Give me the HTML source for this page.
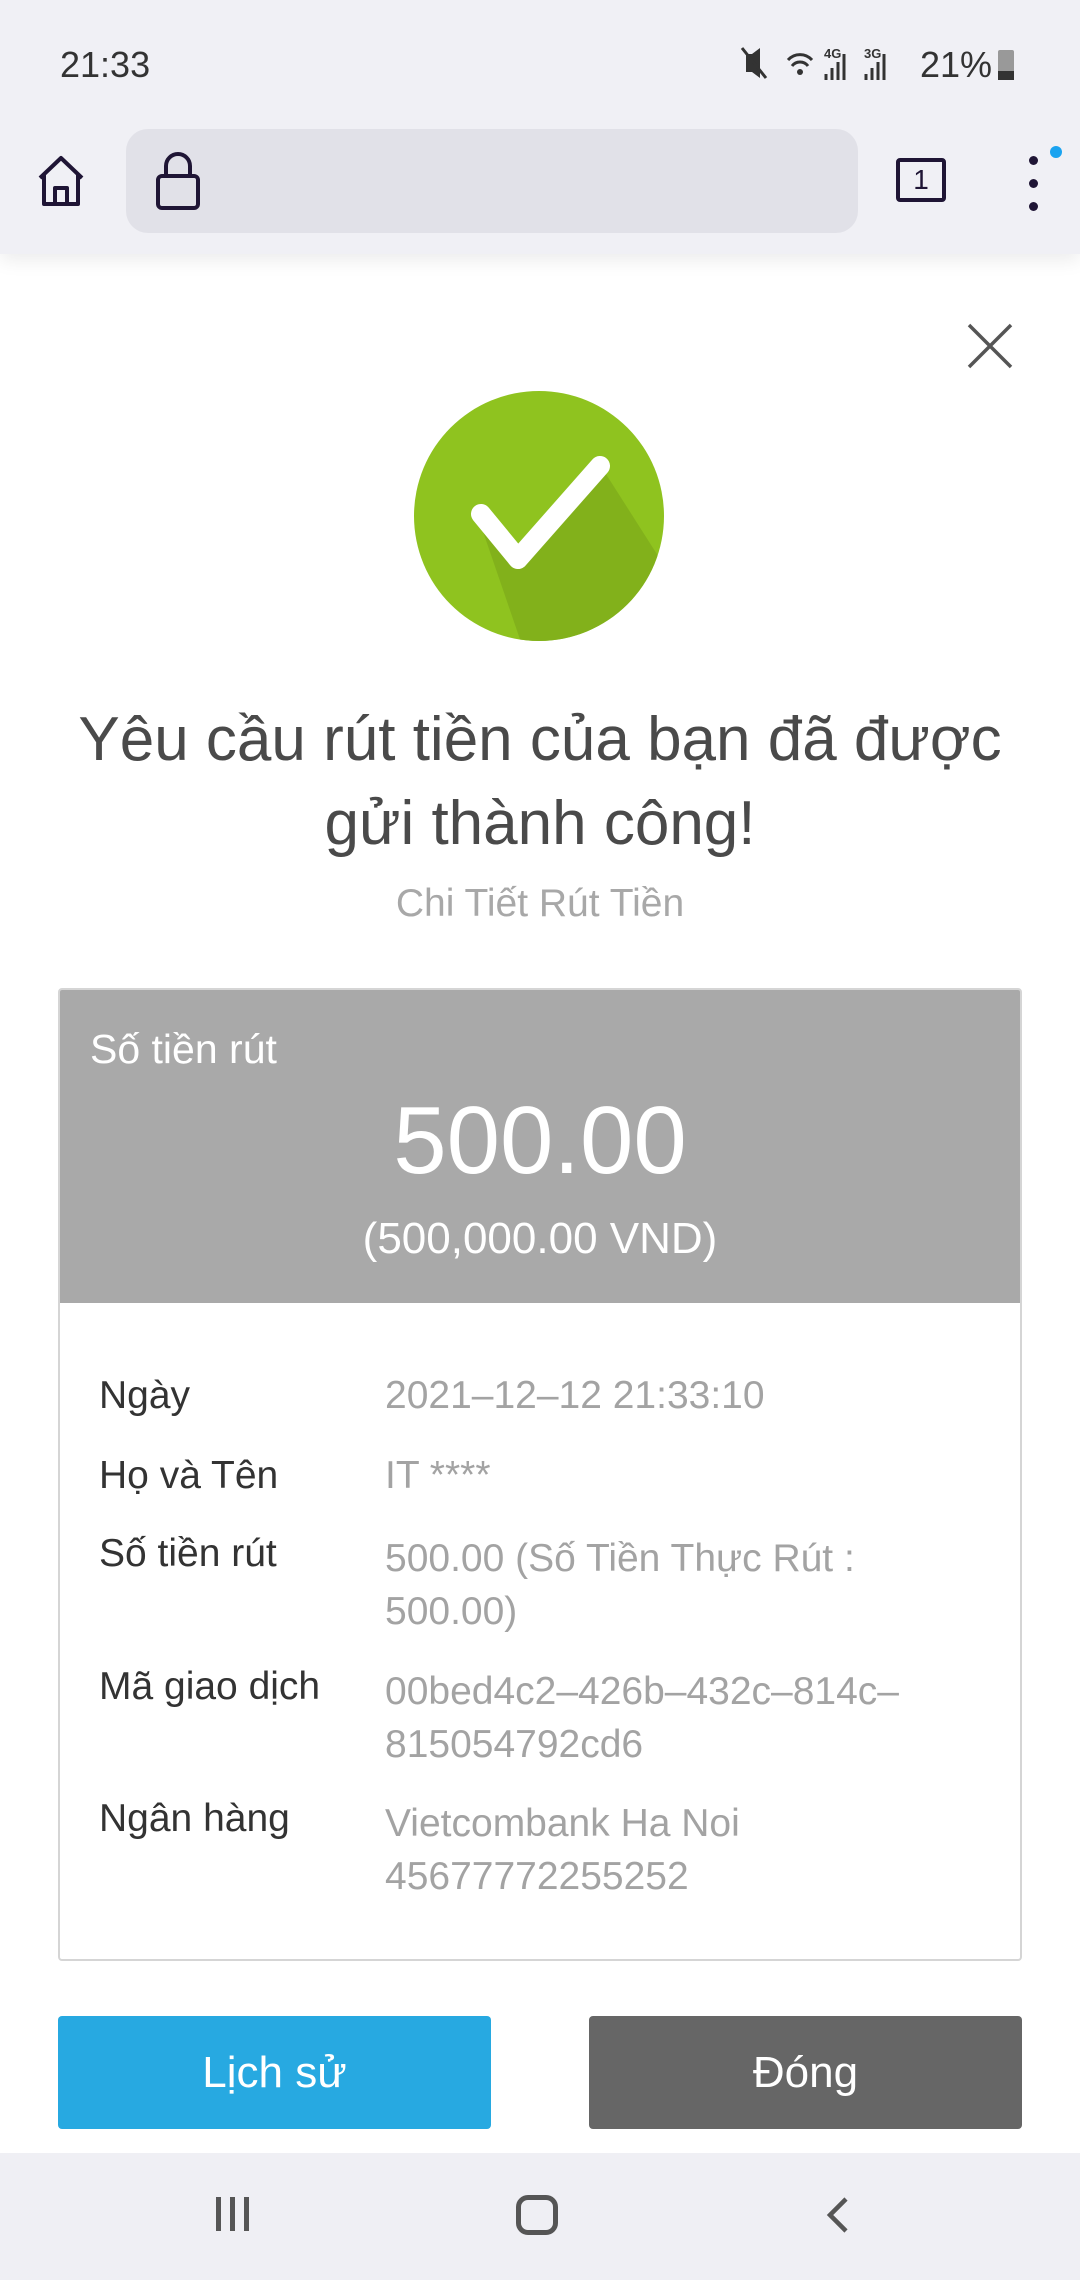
<!DOCTYPE html>
<html><head><meta charset="utf-8"><style>
*{margin:0;padding:0;box-sizing:border-box}
body{width:1080px;height:2280px;position:relative;background:#fff;font-family:"Liberation Sans",sans-serif;overflow:hidden}
.abs{position:absolute}
#status{left:0;top:0;width:1080px;height:254px;background:#f0f0f5;box-shadow:0 6px 18px rgba(0,0,0,.08)}
.row{position:absolute;font-size:39px;color:#333;white-space:nowrap}
.val{color:#a3a3a3}
</style></head><body>
<div id="status" class="abs">
 <div class="abs" style="left:60px;top:44px;font-size:36px;color:#333">21:33</div>
 <svg class="abs" style="left:740px;top:44px" width="170" height="40" viewBox="0 0 170 40">
  <path d="M6 10 H12 L20 4 V34 L12 28 H6 Z" fill="#333"/><path d="M2 4 L26 34" stroke="#333" stroke-width="3"/>
  <path d="M48 16 a16 16 0 0 1 24 0 M52 22 a10 10 0 0 1 16 0" fill="none" stroke="#333" stroke-width="3"/><circle cx="60" cy="28" r="3" fill="#333"/>
  <text x="84" y="14" font-size="13" font-weight="bold" fill="#333" font-family="Liberation Sans">4G</text>
  <path d="M86 36 V30 M92 36 V24 M98 36 V18 M104 36 V10" stroke="#333" stroke-width="3"/>
  <text x="124" y="14" font-size="13" font-weight="bold" fill="#333" font-family="Liberation Sans">3G</text>
  <path d="M126 36 V30 M132 36 V24 M138 36 V18 M144 36 V10" stroke="#333" stroke-width="3"/>
 </svg>
 <div class="abs" style="left:920px;top:44px;font-size:36px;color:#333">21%</div>
 <div class="abs" style="left:998px;top:50px;width:16px;height:30px;background:#999;border-radius:2px"><div style="position:absolute;bottom:0;width:16px;height:9px;background:#333"></div></div>
 <svg class="abs" style="left:36px;top:154px" width="50" height="54" viewBox="0 0 50 54"><path d="M4 24 L25 4 L46 24 M8 20 V50 H42 V20 M19 50 V34 H31 V50" fill="none" stroke="#1f1535" stroke-width="4" stroke-linejoin="round"/></svg>
 <div class="abs" style="left:126px;top:129px;width:732px;height:104px;background:#e1e1e8;border-radius:22px"></div>
 <svg class="abs" style="left:154px;top:150px" width="48" height="62" viewBox="0 0 48 62"><rect x="4" y="26" width="40" height="32" rx="4" fill="none" stroke="#1f1535" stroke-width="4"/><path d="M12 26 V16 a12 12 0 0 1 24 0 V26" fill="none" stroke="#1f1535" stroke-width="4"/></svg>
 <div class="abs" style="left:896px;top:158px;width:50px;height:44px;border:4px solid #1f1535;border-radius:4px;font-size:28px;color:#1f1535;text-align:center;line-height:36px">1</div>
 <div class="abs" style="left:1029px;top:156px;width:9px;height:9px;border-radius:50%;background:#1f1535;box-shadow:0 23px 0 #1f1535,0 46px 0 #1f1535"></div>
 <div class="abs" style="left:1050px;top:146px;width:12px;height:12px;border-radius:50%;background:#1aa3f0"></div>
</div>
<svg class="abs" style="left:966px;top:322px" width="48" height="48" viewBox="0 0 48 48"><path d="M3 3 L45 45 M45 3 L3 45" stroke="#555" stroke-width="3.5"/></svg>
<svg class="abs" style="left:414px;top:391px" width="250" height="250" viewBox="0 0 250 250">
 <defs><clipPath id="c"><circle cx="125" cy="125" r="125"/></clipPath></defs>
 <circle cx="125" cy="125" r="125" fill="#8fc31f"/>
 <path clip-path="url(#c)" d="M64 126 L105 176 L190 80 L260 190 L200 260 L110 260 Z" fill="#7eac1a" opacity=".8"/>
 <path d="M67 123 L104 168 L186 75" fill="none" stroke="#fff" stroke-width="20" stroke-linecap="round" stroke-linejoin="round"/>
</svg>
<div class="abs" style="left:0;width:1080px;top:698px;text-align:center;font-size:62px;line-height:84px;color:#4a4a4a">Yêu cầu rút tiền của bạn đã được<br>gửi thành công!</div>
<div class="abs" style="left:0;width:1080px;top:882px;text-align:center;font-size:39px;color:#a8a8a8">Chi Tiết Rút Tiền</div>
<div class="abs" style="left:58px;top:988px;width:964px;height:973px;border:2px solid #d5d5d5;border-radius:4px;overflow:hidden">
 <div style="height:313px;background:#a9a9a9;position:relative;color:#fff">
  <div class="abs" style="left:30px;top:36px;font-size:41px">Số tiền rút</div>
  <div class="abs" style="left:0;width:100%;top:96px;text-align:center;font-size:96px">500.00</div>
  <div class="abs" style="left:0;width:100%;top:224px;text-align:center;font-size:44px">(500,000.00 VND)</div>
 </div>
</div>
<div class="row" style="left:99px;top:1374px">Ngày</div>
<div class="row val" style="left:385px;top:1374px">2021–12–12 21:33:10</div>
<div class="row" style="left:99px;top:1454px">Họ và Tên</div>
<div class="row val" style="left:385px;top:1454px">IT ****</div>
<div class="row" style="left:99px;top:1532px">Số tiền rút</div>
<div class="row val" style="left:385px;top:1532px;line-height:53px">500.00 (Số Tiền Thực Rút :<br>500.00)</div>
<div class="row" style="left:99px;top:1665px">Mã giao dịch</div>
<div class="row val" style="left:385px;top:1665px;line-height:53px">00bed4c2–426b–432c–814c–<br>815054792cd6</div>
<div class="row" style="left:99px;top:1797px">Ngân hàng</div>
<div class="row val" style="left:385px;top:1797px;line-height:53px">Vietcombank Ha Noi<br>45677772255252</div>
<div class="abs" style="left:58px;top:2016px;width:433px;height:113px;background:#27a9e1;border-radius:4px;color:#fff;font-size:44px;text-align:center;line-height:113px">Lịch sử</div>
<div class="abs" style="left:589px;top:2016px;width:433px;height:113px;background:#666;border-radius:4px;color:#fff;font-size:44px;text-align:center;line-height:113px">Đóng</div>
<div class="abs" style="left:0;top:2153px;width:1080px;height:127px;background:#efeff4">
 <div class="abs" style="left:216px;top:44px;width:5px;height:34px;background:#555;box-shadow:14px 0 0 #555,28px 0 0 #555"></div>
 <div class="abs" style="left:516px;top:42px;width:42px;height:40px;border:5px solid #555;border-radius:12px"></div>
 <svg class="abs" style="left:822px;top:42px" width="30" height="40" viewBox="0 0 30 40"><path d="M24 4 L8 20 L24 36" fill="none" stroke="#555" stroke-width="4.5"/></svg>
</div>
</body></html>
